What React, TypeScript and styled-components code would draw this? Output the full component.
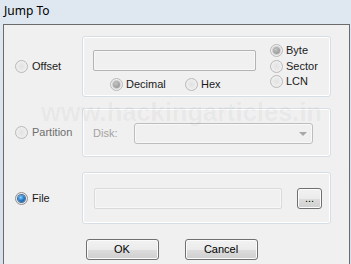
import { createGlobalStyle } from 'styled-components';
import styled from 'styled-components';

const GlobalStyle = createGlobalStyle`
  html, body {
    margin: 0;
    padding: 0;
    width: 351px;
    height: 264px;
    overflow: hidden;
    background: #dce4ee;
  }
  * {
    box-sizing: border-box;
  }
`;

const Window = styled.div`
  width: 351px;
  height: 264px;
  display: flex;
  flex-direction: column;
  background: linear-gradient(#dfe7f0, #d8e1ec);
  padding: 0 1px 0 3px;
  font-family: 'Liberation Sans', Arial, sans-serif;
  font-size: 11px;
  color: #1a1a1a;
`;

const TitleBar = styled.div`
  height: 24px;
  flex: none;
  padding: 0 0 2px 1px;
  line-height: 22px;
  font-family: 'Noto Sans', 'Open Sans', sans-serif;
  font-size: 12px;
  color: #000;
`;

const Client = styled.div`
  position: relative;
  flex: 1;
  background: #f0f0f0;
  border: 1px solid #6b6b6b;
  border-bottom: none;
  padding: 11px 18px 0 11px;
  display: flex;
  flex-direction: column;
`;

const Watermark = styled.div`
  position: absolute;
  left: 37px;
  top: 75px;
  font-family: 'Liberation Sans', Arial, sans-serif;
  font-weight: bold;
  font-size: 25.5px;
  line-height: 25px;
  color: rgba(0, 0, 0, 0.045);
  white-space: nowrap;
  pointer-events: none;
`;

const Row = styled.div<{ $top: number }>`
  display: grid;
  grid-template-columns: 67px 249px;
  align-items: center;
  margin-top: ${(p) => p.$top}px;
`;

const GroupBox = styled.div<{ $h: number }>`
  height: ${(p) => p.$h}px;
  border: 1px solid #d5dfe5;
  border-radius: 3px;
  box-shadow: inset 0 0 0 1px #ffffff;
  display: flex;
`;

const Option = styled.label<{ $muted?: string; $w?: number; $h?: number }>`
  display: flex;
  align-items: center;
  gap: 3px;
  height: ${(p) => (p.$h ? `${p.$h}px` : 'auto')};
  width: ${(p) => (p.$w ? `${p.$w}px` : 'auto')};
  color: ${(p) => p.$muted || '#1a1a1a'};
  line-height: 13px;
  white-space: nowrap;
`;

const Radio = styled.span<{ $checked?: boolean; $disabled?: boolean }>`
  position: relative;
  flex: none;
  width: 13px;
  height: 13px;
  border-radius: 50%;
  border: 1px solid ${(p) => (p.$disabled ? '#b9b9b9' : '#8e8f8f')};
  background: ${(p) =>
    p.$disabled
      ? 'radial-gradient(circle at 50% 50%, #e2e2e2 0%, #eaeaea 45%, #f7f7f7 100%)'
      : 'radial-gradient(circle at 50% 50%, #cfcfcf 0%, #e4e4e4 50%, #fafafa 100%)'};

  &::after {
    content: '';
    display: ${(p) => (p.$checked ? 'block' : 'none')};
    position: absolute;
    left: 2px;
    top: 2px;
    width: 7px;
    height: 7px;
    border-radius: 50%;
    background: ${(p) =>
      p.$disabled
        ? 'radial-gradient(circle at 40% 35%, #c4c4c4 0%, #a2a2a2 60%, #8c8c8c 100%)'
        : 'radial-gradient(circle at 40% 35%, #8fd3ff 0%, #2c83d2 45%, #0d3f7c 100%)'};
    box-shadow: 0 0 0 1px ${(p) => (p.$disabled ? '#d0d0d0' : '#4a6f96')};
  }
`;

const OffsetMain = styled.div`
  display: flex;
  flex-direction: column;
  padding: 13px 0 0 10px;
`;

const TextBox = styled.div<{ $w: number; $tone: string }>`
  width: ${(p) => p.$w}px;
  height: 21px;
  border: 1px solid ${(p) => p.$tone};
  border-radius: 2px;
  background: #f0f0f0;
  box-shadow: inset 0 0 0 1px #f7f7f7;
`;

const BaseRow = styled.div`
  display: flex;
  margin-top: 7px;
  padding-left: 17px;
`;

const UnitCol = styled.div`
  display: flex;
  flex-direction: column;
  padding: 6px 0 0 14px;
`;

const DiskPane = styled.div`
  display: flex;
  align-items: flex-start;
  padding: 14px 0 0 10px;
`;

const DiskLabel = styled.span`
  width: 41px;
  line-height: 21px;
  color: #a3a3a3;
`;

const Combo = styled.div`
  position: relative;
  width: 179px;
  height: 21px;
  border: 1px solid #bdbdbd;
  border-radius: 3px;
  background: #f0f0f0;
  box-shadow: inset 0 0 0 1px #f8f8f8;

  &::after {
    content: '';
    position: absolute;
    right: 5px;
    top: 8px;
    border-left: 4px solid transparent;
    border-right: 4px solid transparent;
    border-top: 4px solid #a8a8a8;
  }
`;

const FilePane = styled.div`
  display: flex;
  align-items: flex-start;
  gap: 15px;
  padding: 15px 0 0 11px;
`;

const Button = styled.button<{ $w: number }>`
  width: ${(p) => p.$w}px;
  height: 21px;
  padding: 0;
  border: 1px solid #707070;
  border-radius: 3px;
  background: linear-gradient(#f2f2f2 0%, #ebebeb 50%, #dddddd 51%, #cfcfcf 100%);
  box-shadow: inset 0 0 0 1px #fbfbfb;
  font-family: 'Liberation Sans', Arial, sans-serif;
  font-size: 11px;
  color: #000;
  line-height: 19px;
`;

const ButtonRow = styled.div`
  display: flex;
  justify-content: center;
  gap: 26px;
  margin-top: 15px;
  padding-right: 3px;
`;

export default function App() {
  return (
    <>
      <GlobalStyle />
      <Window>
        <TitleBar>Jump To</TitleBar>
        <Client>
          <Row $top={0}>
            <Option>
              <Radio $disabled />
              <span style={{ marginLeft: 1 }}>Offset</span>
            </Option>
            <GroupBox $h={61}>
              <OffsetMain>
                <TextBox $w={163} $tone="#b3b3b3" />
                <BaseRow>
                  <Option $w={75}>
                    <Radio $checked $disabled />
                    Decimal
                  </Option>
                  <Option>
                    <Radio $disabled />
                    Hex
                  </Option>
                </BaseRow>
              </OffsetMain>
              <UnitCol>
                <Option $h={15.5}>
                  <Radio $checked $disabled />
                  Byte
                </Option>
                <Option $h={15.5}>
                  <Radio $disabled />
                  Sector
                </Option>
                <Option $h={15.5}>
                  <Radio $disabled />
                  LCN
                </Option>
              </UnitCol>
            </GroupBox>
          </Row>

          <Row $top={11}>
            <Option $muted="#6e6e6e">
              <Radio $disabled />
              <span style={{ marginLeft: 1 }}>Partition</span>
            </Option>
            <GroupBox $h={49}>
              <DiskPane>
                <DiskLabel>Disk:</DiskLabel>
                <Combo />
              </DiskPane>
            </GroupBox>
          </Row>

          <Row $top={15}>
            <Option>
              <Radio $checked />
              <span style={{ marginLeft: 1 }}>File</span>
            </Option>
            <GroupBox $h={52}>
              <FilePane>
                <TextBox $w={188} $tone="#dadada" />
                <Button $w={25}>...</Button>
              </FilePane>
            </GroupBox>
          </Row>

          <ButtonRow>
            <Button $w={73}>OK</Button>
            <Button $w={73}>Cancel</Button>
          </ButtonRow>

          <Watermark>www.hackingarticles.in</Watermark>
        </Client>
      </Window>
    </>
  );
}
